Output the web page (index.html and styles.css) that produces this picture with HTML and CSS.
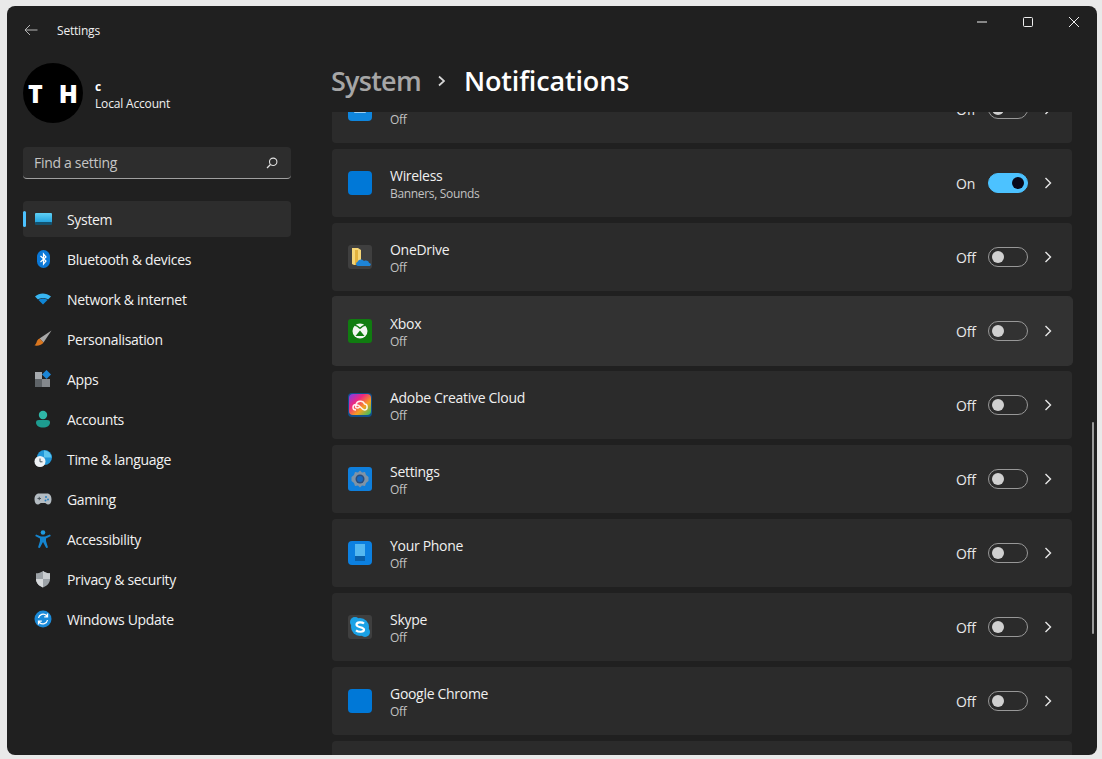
FILE: index.html
```html
<!DOCTYPE html>
<html lang="en">
<head>
<meta charset="utf-8">
<title>Settings</title>
<link rel="stylesheet" href="styles.css">
</head>
<body>
<div class="window">
  <aside class="sidebar">
    <div class="titlebar">
      <svg class="back" width="14" height="12" viewBox="0 0 14 12"><path d="M6 1 1 6l5 5M1 6h12.500" fill="none" stroke="#b5b5b5" stroke-width="1"/></svg>
      <span class="app-name">Settings</span>
    </div>
    <div class="profile">
      <div class="avatar"><span>T</span><span>H</span></div>
      <div class="profile-text">
        <div class="profile-name">c</div>
        <div class="profile-type">Local Account</div>
      </div>
    </div>
    <div class="search">
      <span>Find a setting</span>
      <svg width="12" height="12" viewBox="0 0 12 12"><circle cx="7.200" cy="4.800" r="3.700" fill="none" stroke="#e0e0e0" stroke-width="1.100"/><path d="M4.500 7.500 1 11" stroke="#e0e0e0" stroke-width="1.200"/></svg>
    </div>
    <nav class="nav">
      <div class="nav-item active">
        <span class="accent"></span>
        <svg class="nav-icon" width="18" height="18" viewBox="0 0 18 18"><defs><linearGradient id="g1" x1="0" y1="0" x2="0" y2="1"><stop offset="0" stop-color="#5fd0f5"/><stop offset="1" stop-color="#1f9fdc"/></linearGradient></defs><rect x="1" y="3" width="17" height="10" rx="1" fill="url(#g1)"/><rect x="1" y="12" width="17" height="3" rx="1" fill="#14526f"/></svg>
        <span>System</span>
      </div>
      <div class="nav-item">
        <svg class="nav-icon" width="18" height="18" viewBox="0 0 18 18"><rect x="3" y="0" width="13" height="18" rx="6.500" fill="#0a78d8"/><path d="M6.500 6 12 11l-2.500 3V4L12 7l-5.500 5" fill="none" stroke="#fff" stroke-width="1.200"/></svg>
        <span>Bluetooth &amp; devices</span>
      </div>
      <div class="nav-item">
        <svg class="nav-icon" width="18" height="18" viewBox="0 0 18 18"><path d="M1 6.500C5.500 2.500 12 2.500 17 6.500L14 9.500C11 7.500 7 7.500 4 9.500Z" fill="#38b6f2"/><path d="M4.500 10C7 8 11 8 13.500 10L9 14.500Z" fill="#0f86d6"/></svg>
        <span>Network &amp; internet</span>
      </div>
      <div class="nav-item">
        <svg class="nav-icon" width="18" height="18" viewBox="0 0 18 18"><path d="M17.500 .5 5.500 8.500l4 4Z" fill="#a8a8a8"/><path d="M5.500 8.500c-2 .5-2.500 2.500-3 4-.3 1-1 2-2 3 3.500.5 8-.5 9-3Z" fill="#d9761f"/></svg>
        <span>Personalisation</span>
      </div>
      <div class="nav-item">
        <svg class="nav-icon" width="18" height="18" viewBox="0 0 18 18"><rect x="1" y="2" width="7" height="7" fill="#a5a9ad"/><rect x="1" y="9" width="7" height="8" fill="#5f6468"/><rect x="8" y="9" width="8" height="8" fill="#85898d"/><path d="M12.500 0 17 4.500 12.500 9 8 4.500Z" fill="#1a86d8"/></svg>
        <span>Apps</span>
      </div>
      <div class="nav-item">
        <svg class="nav-icon" width="18" height="18" viewBox="0 0 18 18"><circle cx="9" cy="5" r="4.200" fill="#2fb7a8"/><path d="M2 12.500C2 10.800 3 10 5 10h8c2 0 3 .8 3 2.500 0 3-3 5-7 5s-7-2-7-5Z" fill="#1d9c90"/></svg>
        <span>Accounts</span>
      </div>
      <div class="nav-item">
        <svg class="nav-icon" width="18" height="18" viewBox="0 0 18 18"><circle cx="10.500" cy="7.500" r="7.500" fill="#2196d8"/><path d="M10 .5a7.500 7.500 0 0 1 7.500 7H10Z" fill="#5cc4ee"/><circle cx="6" cy="11.500" r="5.500" fill="#eef2f5"/><path d="M6 8.500v3.300h2.500" fill="none" stroke="#44505a" stroke-width="1"/></svg>
        <span>Time &amp; language</span>
      </div>
      <div class="nav-item">
        <svg class="nav-icon" width="18" height="18" viewBox="0 0 18 18"><path d="M5 3.500h8c3 0 4.500 2.500 4.500 6 0 3-1.500 5-3.500 5-1.500 0-2-1.500-3-1.500H7c-1 0-1.500 1.500-3 1.500-2 0-3.500-2-3.500-5 0-3.500 1.500-6 4.500-6Z" fill="#b4bcc2"/><path d="M3.500 8.500h3.500M5.250 6.800v3.400" stroke="#48525a" stroke-width="1"/><circle cx="12" cy="7" r="1" fill="#2b7fc0"/><circle cx="14" cy="9.500" r="1" fill="#2b7fc0"/><circle cx="11.500" cy="10.500" r="1" fill="#2b7fc0"/></svg>
        <span>Gaming</span>
      </div>
      <div class="nav-item">
        <svg class="nav-icon" width="18" height="18" viewBox="0 0 18 18"><circle cx="9" cy="2.500" r="2.300" fill="#1f9be0"/><path d="M2 4.500 7 6.500h4l5-2 .8 1.500L12 8.500V11l2 6.500-1.800.5L9 12l-3.200 6-1.800-.5L6 11V8.500L1.200 6Z" fill="#1585cf"/></svg>
        <span>Accessibility</span>
      </div>
      <div class="nav-item">
        <svg class="nav-icon" width="18" height="18" viewBox="0 0 18 18"><path d="M9 1c2 1.500 4.500 2.300 7 2.300V9c0 4-3 7-7 8.500C5 16 2 13 2 9V3.300C4.500 3.300 7 2.500 9 1Z" fill="#9ca2a7"/><path d="M9 1c2 1.500 4.500 2.300 7 2.300V9H9Z" fill="#c9cdd0"/><path d="M2 9h7v8.500C5 16 2 13 2 9Z" fill="#d6d9db"/></svg>
        <span>Privacy &amp; security</span>
      </div>
      <div class="nav-item">
        <svg class="nav-icon" width="18" height="18" viewBox="0 0 18 18"><circle cx="9" cy="9" r="8.500" fill="#1a8ad8"/><path d="M4.500 8a4.700 4.700 0 0 1 8-2.500l1 1M13.500 3.500v3.300h-3.300M13.500 10a4.700 4.700 0 0 1-8 2.500l-1-1M4.500 14.500v-3.300h3.300" fill="none" stroke="#fff" stroke-width="1.300"/></svg>
        <span>Windows Update</span>
      </div>
    </nav>
  </aside>

  <main class="main">
    <div class="window-controls">
      <svg width="12" height="12" viewBox="0 0 12 12"><path d="M1 6h10" stroke="#eee" stroke-width="1"/></svg>
      <svg width="12" height="12" viewBox="0 0 12 12"><rect x="1.500" y="1.500" width="9" height="9" rx="1" fill="none" stroke="#eee" stroke-width="1"/></svg>
      <svg width="12" height="12" viewBox="0 0 12 12"><path d="M1 1l10 10M11 1 1 11" stroke="#eee" stroke-width="1"/></svg>
    </div>
    <h1 class="heading">
      <span class="crumb">System</span>
      <svg class="crumb-sep" width="10" height="14" viewBox="0 0 10 14"><path d="M2 2.500 7 7l-5 4.500" fill="none" stroke="#d5d5d5" stroke-width="1.700"/></svg>
      <span class="crumb-current">Notifications</span>
    </h1>
    <div class="scroller">
      <div class="list">
        <div class="card">
          <svg class="app-icon" width="24" height="24" viewBox="0 0 24 24"><rect width="24" height="24" rx="4" fill="#0f86de"/><rect x="7" y="2" width="10" height="13" fill="none" stroke="#cde8fa" stroke-width="1.500"/></svg>
          <div class="card-text"><div class="card-title"></div><div class="card-sub">Off</div></div>
          <span class="state">Off</span><span class="toggle"></span>
          <svg class="chev" width="8" height="12" viewBox="0 0 8 12"><path d="M1.500 1 6.500 6l-5 5" fill="none" stroke="#e6e6e6" stroke-width="1.400"/></svg>
        </div>
        <div class="card">
          <svg class="app-icon" width="24" height="24" viewBox="0 0 24 24"><rect width="24" height="24" rx="4" fill="#0078d7"/></svg>
          <div class="card-text"><div class="card-title">Wireless</div><div class="card-sub">Banners, Sounds</div></div>
          <span class="state">On</span><span class="toggle on"></span>
          <svg class="chev" width="8" height="12" viewBox="0 0 8 12"><path d="M1.500 1 6.500 6l-5 5" fill="none" stroke="#e6e6e6" stroke-width="1.400"/></svg>
        </div>
        <div class="card">
          <svg class="app-icon" width="24" height="24" viewBox="0 0 24 24"><rect width="24" height="24" rx="3" fill="#3f3f3f"/><path d="M4 3h6l3 2v15H6l-2-1Z" fill="#f5d576"/><path d="M7 5h3v15H7Z" fill="#e2b23e"/><path d="M10 21c-2.500 0-2.500-3.500-.5-4 .5-3 5-3.500 6.500-1 2.500-1 5 0 5 2 2.500.2 2.500 3 0 3Z" fill="#1e84d6"/></svg>
          <div class="card-text"><div class="card-title">OneDrive</div><div class="card-sub">Off</div></div>
          <span class="state">Off</span><span class="toggle"></span>
          <svg class="chev" width="8" height="12" viewBox="0 0 8 12"><path d="M1.500 1 6.500 6l-5 5" fill="none" stroke="#e6e6e6" stroke-width="1.400"/></svg>
        </div>
        <div class="card hovered">
          <svg class="app-icon" width="24" height="24" viewBox="0 0 24 24"><rect width="24" height="24" rx="3" fill="#107c10"/><circle cx="12" cy="12" r="7.500" fill="#f2f6f2"/><path d="M12 9.500C10.500 8 8.500 6 6.500 6.500M12 9.500C13.500 8 15.500 6 17.500 6.500" fill="none" stroke="#107c10" stroke-width="1.200"/><path d="M12 11.500 7.500 17h9Z" fill="#107c10"/></svg>
          <div class="card-text"><div class="card-title">Xbox</div><div class="card-sub">Off</div></div>
          <span class="state">Off</span><span class="toggle"></span>
          <svg class="chev" width="8" height="12" viewBox="0 0 8 12"><path d="M1.500 1 6.500 6l-5 5" fill="none" stroke="#e6e6e6" stroke-width="1.400"/></svg>
        </div>
        <div class="card">
          <svg class="app-icon" width="24" height="24" viewBox="0 0 24 24"><defs><linearGradient id="g2" x1="0" y1="0" x2="1" y2="1"><stop offset="0" stop-color="#7a3cf0"/><stop offset=".35" stop-color="#f0287c"/><stop offset=".65" stop-color="#f5a020"/><stop offset="1" stop-color="#1fc46a"/></linearGradient></defs><rect width="24" height="24" rx="4" fill="#10508c"/><rect x="1" y="1" width="22" height="21" rx="4" fill="url(#g2)"/><path d="M8 17c-4 0-4-5.500 0-5.500 1-4 7-4.500 8.500-.5 3.500 0 3.500 6 0 6-3 0-4.500-5-7-5-2.500 0-2.500 3 0 3 1 0 1.500-.5 2-1" fill="none" stroke="#fff" stroke-width="1.500" opacity=".9"/></svg>
          <div class="card-text"><div class="card-title">Adobe Creative Cloud</div><div class="card-sub">Off</div></div>
          <span class="state">Off</span><span class="toggle"></span>
          <svg class="chev" width="8" height="12" viewBox="0 0 8 12"><path d="M1.500 1 6.500 6l-5 5" fill="none" stroke="#e6e6e6" stroke-width="1.400"/></svg>
        </div>
        <div class="card">
          <svg class="app-icon" width="24" height="24" viewBox="0 0 24 24"><rect width="24" height="24" rx="3" fill="#0f7fdc"/><path d="M12 3.500l2 2 3-.5 1 3 2.500 2v4L18 16l-1 3-3-.5-2 2-2-2-3 .5-1-3-2.500-2v-4L6 8l1-3 3 .5Z" fill="#7f93a6"/><circle cx="12" cy="12" r="4.500" fill="#2a4d7c"/><circle cx="12" cy="12" r="3" fill="#1668c0"/></svg>
          <div class="card-text"><div class="card-title">Settings</div><div class="card-sub">Off</div></div>
          <span class="state">Off</span><span class="toggle"></span>
          <svg class="chev" width="8" height="12" viewBox="0 0 8 12"><path d="M1.500 1 6.500 6l-5 5" fill="none" stroke="#e6e6e6" stroke-width="1.400"/></svg>
        </div>
        <div class="card">
          <svg class="app-icon" width="24" height="24" viewBox="0 0 24 24"><rect width="24" height="24" rx="4" fill="#0c80e0"/><rect x="7" y="3" width="10" height="12" fill="#55b8f0"/><rect x="7" y="15" width="10" height="5" fill="#0a5fa8"/></svg>
          <div class="card-text"><div class="card-title">Your Phone</div><div class="card-sub">Off</div></div>
          <span class="state">Off</span><span class="toggle"></span>
          <svg class="chev" width="8" height="12" viewBox="0 0 8 12"><path d="M1.500 1 6.500 6l-5 5" fill="none" stroke="#e6e6e6" stroke-width="1.400"/></svg>
        </div>
        <div class="card">
          <svg class="app-icon" width="24" height="24" viewBox="0 0 24 24"><rect width="24" height="24" rx="3" fill="#3f3f3f"/><circle cx="7" cy="7" r="5" fill="#1ba2e6"/><circle cx="17" cy="17" r="5" fill="#1ba2e6"/><circle cx="12" cy="12" r="9" fill="#1ba2e6"/><path d="M16 8.500C14 6.800 8.500 6.800 8.500 9.800c0 3 7.500 1.800 7.500 4.700 0 3-5.700 2.700-8 .8" fill="none" stroke="#fff" stroke-width="2.200"/></svg>
          <div class="card-text"><div class="card-title">Skype</div><div class="card-sub">Off</div></div>
          <span class="state">Off</span><span class="toggle"></span>
          <svg class="chev" width="8" height="12" viewBox="0 0 8 12"><path d="M1.500 1 6.500 6l-5 5" fill="none" stroke="#e6e6e6" stroke-width="1.400"/></svg>
        </div>
        <div class="card">
          <svg class="app-icon" width="24" height="24" viewBox="0 0 24 24"><rect width="24" height="24" rx="4" fill="#0078d7"/></svg>
          <div class="card-text"><div class="card-title">Google Chrome</div><div class="card-sub">Off</div></div>
          <span class="state">Off</span><span class="toggle"></span>
          <svg class="chev" width="8" height="12" viewBox="0 0 8 12"><path d="M1.500 1 6.500 6l-5 5" fill="none" stroke="#e6e6e6" stroke-width="1.400"/></svg>
        </div>
        <div class="card"></div>
      </div>
      <div class="scrollbar"></div>
    </div>
  </main>
</div>
</body>
</html>
```
FILE: styles.css
```css
* { box-sizing: border-box; }
html, body { margin: 0; height: 100%; }
body {
  height: 759px;
  padding: 6px 5px 4px 7px;
  background: #e9e9e9;
  font-family: "Open Sans", "Noto Sans", sans-serif;
  color: #fff;
  overflow: hidden;
}
.window {
  display: flex;
  height: 749px;
  background: #202020;
  border-radius: 8px;
  overflow: hidden;
}
.sidebar {
  width: 325px;
  flex: none;
  padding: 0 41px 0 16px;
}
.titlebar {
  display: flex;
  align-items: center;
  height: 48px;
}
.back { margin-left: 1px; }
.app-name {
  margin-left: 19px;
  font-size: 12px;
  letter-spacing: -0.2px;
  color: #f0f0f0;
}
.profile {
  display: flex;
  align-items: center;
  gap: 12px;
  margin-top: 9px;
}
.avatar {
  width: 60px;
  height: 60px;
  border-radius: 50%;
  background: #000;
  display: flex;
  align-items: center;
  justify-content: center;
  gap: 16px;
  font-size: 25px;
  font-weight: 800;
  line-height: 1;
}
.profile-text { padding-top: 4px; font-size: 12px; line-height: 17px; letter-spacing: -0.17px; }
.profile-name { font-weight: 700; }
.profile-type { color: #f0f0f0; }
.search {
  display: flex;
  align-items: center;
  justify-content: space-between;
  height: 32px;
  margin-top: 24px;
  padding: 0 13px 0 11px;
  background: #2d2d2d;
  border-bottom: 1px solid #a0a0a0;
  border-radius: 4px;
  font-size: 14px;
  letter-spacing: -0.3px;
  color: #c5c5c5;
}
.nav {
  display: flex;
  flex-direction: column;
  gap: 4px;
  margin-top: 22px;
}
.nav-item {
  position: relative;
  display: flex;
  align-items: center;
  gap: 15px;
  height: 36px;
  padding-left: 11px;
  border-radius: 4px;
  font-size: 14px;
  letter-spacing: -0.32px;
  color: #f2f2f2;
}
.nav-item.active { background: #2d2d2d; }
.nav-icon { flex: none; }
.accent {
  position: absolute;
  left: 0;
  top: 10px;
  width: 3px;
  height: 16px;
  border-radius: 2px;
  background: #4cc2ff;
}
.main {
  flex: 1;
  min-width: 0;
  display: flex;
  flex-direction: column;
}
.window-controls {
  display: flex;
  justify-content: flex-end;
  gap: 34px;
  height: 57px;
  padding: 10px 17px 0 0;
}
.heading {
  display: flex;
  align-items: center;
  height: 49px;
  margin: 0 0 0 -1px;
  padding-bottom: 13px;
  font-size: 27px;
  font-weight: 600;
  line-height: 36px;
}
.crumb { color: #a6a6a6; letter-spacing: -0.75px; }
.crumb-current { letter-spacing: -0.15px; }
.crumb-sep { margin: 0 17px 0 16px; }
.scroller {
  position: relative;
  flex: 1;
  min-height: 0;
  overflow: hidden;
}
.list {
  display: flex;
  flex-direction: column;
  gap: 6px;
  margin-top: -37px;
  padding-right: 25px;
}
.card {
  display: flex;
  align-items: center;
  flex: none;
  height: 68px;
  padding: 0 20px 0 16px;
  background: #2b2b2b;
  border-radius: 4px;
}
.card.hovered {
  background: #323232;
  box-shadow: 0 0 0 1px #323232;
}
.app-icon { flex: none; }
.card-text { flex: 1; margin-left: 18px; padding-top: 4px; }
.card-title { min-height: 18px; font-size: 14px; line-height: 18px; letter-spacing: -0.3px; color: #f0f0f0; }
.card-sub { font-size: 12px; line-height: 18px; letter-spacing: -0.33px; color: #c2c2c2; }
.state { width: 32px; font-size: 14px; letter-spacing: -0.2px; color: #e8e8e8; }
.toggle {
  position: relative;
  width: 40px;
  height: 20px;
  border: 1px solid #989898;
  border-radius: 10px;
  margin-right: 16px;
}
.toggle::after {
  content: "";
  position: absolute;
  left: 3px;
  top: 3px;
  width: 12px;
  height: 12px;
  border-radius: 50%;
  background: #d0d0d0;
}
.toggle.on { background: #4cc2ff; border-color: #4cc2ff; }
.toggle.on::after { left: 23px; background: #08081a; }
.chev { flex: none; }
.scrollbar {
  position: absolute;
  right: 3px;
  top: 310px;
  width: 2px;
  height: 212px;
  border-radius: 1px;
  background: #9a9a9a;
}
```
